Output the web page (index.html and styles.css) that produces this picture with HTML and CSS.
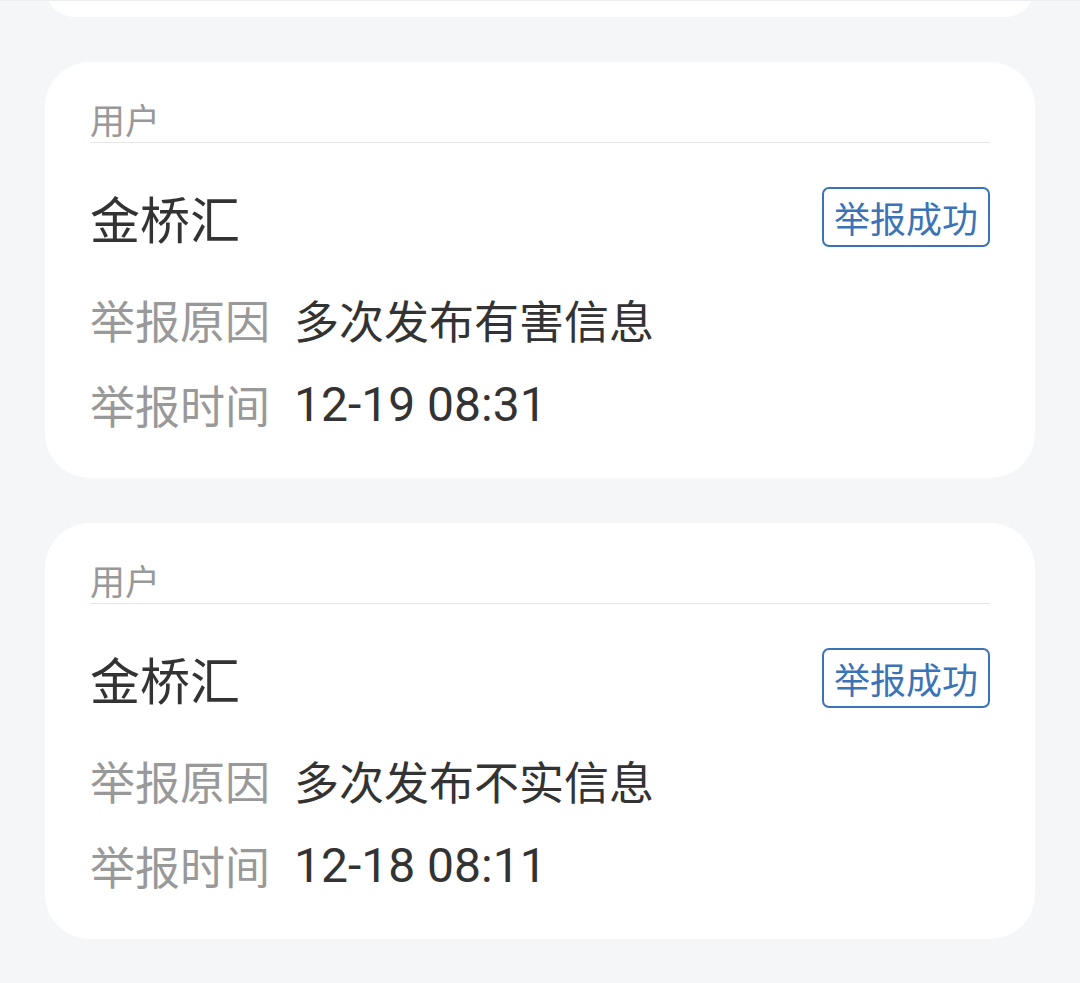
FILE: index.html
```html
<!DOCTYPE html>
<html lang="zh-CN">
<head>
<meta charset="utf-8">
<title>举报记录</title>
<link rel="stylesheet" href="styles.css">
</head>
<body>
<div class="list">
  <div class="card card-stub"></div>

  <div class="card">
    <div class="card-head">用户</div>
    <div class="title-row">
      <span class="name">金桥汇</span>
      <span class="tag">举报成功</span>
    </div>
    <div class="row"><span class="label">举报原因</span><span class="value">多次发布有害信息</span></div>
    <div class="row"><span class="label">举报时间</span><span class="value num">12-19 08:31</span></div>
  </div>

  <div class="card">
    <div class="card-head">用户</div>
    <div class="title-row">
      <span class="name">金桥汇</span>
      <span class="tag">举报成功</span>
    </div>
    <div class="row"><span class="label">举报原因</span><span class="value">多次发布不实信息</span></div>
    <div class="row"><span class="label">举报时间</span><span class="value num">12-18 08:11</span></div>
  </div>
</div>
</body>
</html>
```
FILE: styles.css
```css
html, body {
  margin: 0;
  padding: 0;
}
body {
  background: #f5f6f8;
  font-family: "Noto Sans CJK SC", "Noto Sans", sans-serif;
  color: #333333;
  height: 983px;
  overflow: hidden;
  border-top: 1px solid #eceef1;
  box-sizing: border-box;
}
.list {
  display: flex;
  flex-direction: column;
  gap: 45px;
  padding: 0 45px;
}
.card {
  background: #ffffff;
  border-radius: 45px;
  padding: 0 45px 31px;
}
.card-stub {
  height: 60px;
  margin-top: -44px;
  padding: 0;
}
.card-head {
  box-sizing: border-box;
  height: 81px;
  padding-top: 33px;
  font-size: 35px;
  line-height: 48px;
  color: #999999;
  border-bottom: 1px solid #e6e6e6;
}
.title-row {
  display: flex;
  align-items: center;
  justify-content: space-between;
  margin-top: 44px;
  height: 60px;
  margin-bottom: 30px;
}
.name {
  font-size: 50px;
  line-height: 60px;
  color: #333333;
}
.tag {
  box-sizing: border-box;
  width: 168px;
  height: 60px;
  border: 2px solid #3c73b6;
  border-radius: 7px;
  color: #3c73b6;
  font-size: 36px;
  line-height: 56px;
  text-align: center;
}
.row {
  display: flex;
  align-items: center;
  height: 85px;
  font-size: 45px;
}
.label {
  color: #999999;
  width: 180px;
  margin-right: 24px;
  flex: none;
}
.value {
  color: #333333;
}
.num {
  font-family: Roboto, "Noto Sans CJK SC", sans-serif;
  font-size: 48px;
}
```
